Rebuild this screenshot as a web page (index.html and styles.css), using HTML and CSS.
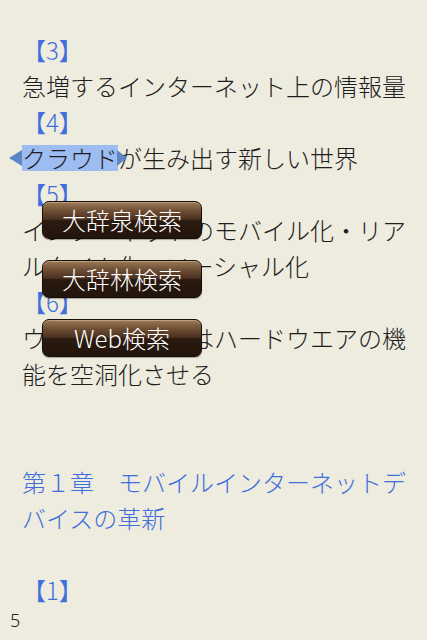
FILE: index.html
```html
<!DOCTYPE html>
<html lang="ja">
<head>
<meta charset="utf-8">
<link rel="stylesheet" href="styles.css">
</head>
<body>
<div class="screen">
  <div class="text">
    <p class="line head">【3】</p>
    <p class="line">急増するインターネット上の情報量</p>
    <p class="line head">【4】</p>
    <p class="line"><span class="sel"><span class="handle left"></span>クラウド<span class="handle right"></span></span>が生み出す新しい世界</p>
    <p class="line head">【5】</p>
    <p class="line">インターネットのモバイル化・リアルタイム化・ソーシャル化</p>
    <p class="line head">【6】</p>
    <p class="line">ウェブサービスはハードウエアの機能を空洞化させる</p>
    <p class="line gap"></p>
    <p class="line chapter">第１章　モバイルインターネットデバイスの革新</p>
    <p class="line gap1"></p>
    <p class="line head">【1】</p>
  </div>
  <div class="footer">5</div>
  <div class="menu">
    <button class="btn">大辞泉検索</button>
    <button class="btn">大辞林検索</button>
    <button class="btn">Web検索</button>
  </div>
</div>
</body>
</html>
```
FILE: styles.css
```css
html, body {
  margin: 0;
  padding: 0;
  background: #eeebdf;
}
.screen {
  position: relative;
  width: 427px;
  height: 640px;
  overflow: hidden;
  display: flex;
  flex-direction: column;
  background: #eeebdf;
  font-family: "Noto Sans CJK JP", "Liberation Sans", sans-serif;
  font-weight: 300;
}
.text {
  padding: 32px 21px 0 22px;
  flex: 1;
}
.line {
  margin: 0;
  font-size: 24px;
  line-height: 36px;
  color: #1e1e1e;
  word-break: break-all;
}
.head, .chapter {
  color: #3f6fdc;
}
.gap { height: 72px; }
.gap1 { height: 36px; }
.sel {
  position: relative;
  background: #9dbcf2;
  display: inline-block;
  line-height: 26px;
}
.handle {
  position: absolute;
  top: 5px;
  width: 0;
  height: 0;
  border-top: 8px solid transparent;
  border-bottom: 8px solid transparent;
}
.handle.left {
  left: -13px;
  border-right: 13px solid #5f86c4;
}
.handle.right {
  right: -9px;
  border-left: 10px solid #5f86c4;
}
.footer {
  padding: 0 0 8px 10px;
  font-size: 18px;
  line-height: 24px;
  color: #222;
  font-family: "Noto Sans", "Liberation Sans", sans-serif;
}
.menu {
  position: absolute;
  left: 42px;
  top: 201px;
  display: flex;
  flex-direction: column;
  gap: 21px;
}
.btn {
  width: 160px;
  height: 38px;
  padding: 0;
  border: 1px solid #1a0f08;
  border-radius: 7px;
  background: linear-gradient(to bottom, #9b7a58 0%, #6e4e33 25%, #4a3020 48%, #2a1a0f 52%, #22150c 100%);
  box-shadow: inset 0 1px 0 rgba(255,230,200,0.35), 0 1px 1px rgba(0,0,0,0.3);
  color: #ffffff;
  font-family: "Noto Sans CJK JP", "Liberation Sans", sans-serif;
  font-weight: 300;
  font-size: 24px;
  line-height: 36px;
  text-align: center;
}
```
